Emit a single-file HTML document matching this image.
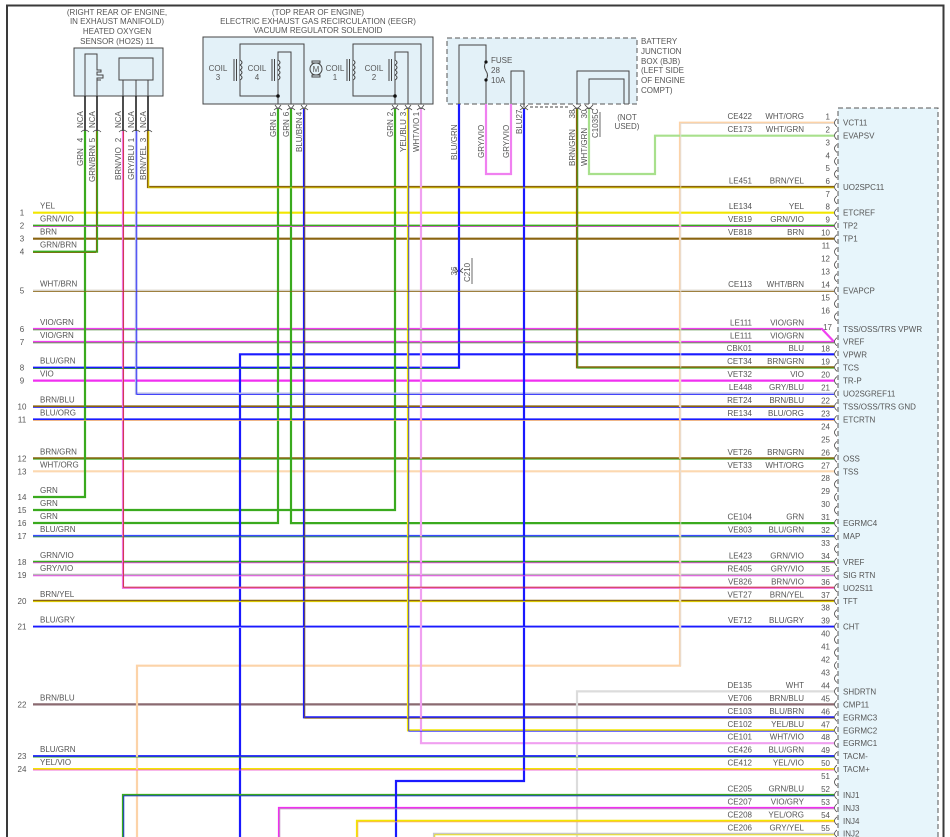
<!DOCTYPE html>
<html><head><meta charset="utf-8"><style>
html,body{margin:0;padding:0;background:#fff;width:950px;height:837px;overflow:hidden;}
svg{display:block;font-family:"Liberation Sans",Arial,sans-serif;}
text{font-size:8px;fill:#555;}
</style></head><body>
<svg width="950" height="837" viewBox="0 0 950 837" xmlns="http://www.w3.org/2000/svg">
<rect x="0" y="0" width="950" height="837" fill="#fff"/>
<path d="M7 837 V5.5 H943.5 V837" fill="none" stroke="#3a3a3a" stroke-width="2"/>
<rect x="838" y="108" width="100" height="740" fill="#e7f5fb" stroke="#555" stroke-width="1" stroke-dasharray="5,3"/>

<g font-size="8">
<text x="117" y="15" text-anchor="middle">(RIGHT REAR OF ENGINE,</text>
<text x="117" y="24" text-anchor="middle">IN EXHAUST MANIFOLD)</text>
<text x="117" y="34" text-anchor="middle">HEATED OXYGEN</text>
<text x="117" y="44" text-anchor="middle">SENSOR (HO2S) 11</text>
<text x="318" y="15" text-anchor="middle">(TOP REAR OF ENGINE)</text>
<text x="318" y="24" text-anchor="middle">ELECTRIC EXHAUST GAS RECIRCULATION (EEGR)</text>
<text x="318" y="33" text-anchor="middle">VACUUM REGULATOR SOLENOID</text>
</g>
<rect x="74" y="48" width="89" height="48" fill="#e3f1f8" stroke="#444" stroke-width="1"/>
<path d="M85 96 V54 H97 V70 H101 V72 H97 V75 H103 V78 H97 V80 H101 M97 80 V96" fill="none" stroke="#444" stroke-width="1"/>
<rect x="119" y="58" width="34" height="22" fill="#e3f1f8" stroke="#444" stroke-width="1"/>
<path d="M123 80 V96 M136 80 V96 M148 80 V96" stroke="#444" stroke-width="1"/>
<path d="M85 96 V131 M97 96 V131 M123 96 V131 M136 96 V131 M148 96 V131" stroke="#222" stroke-width="1.6"/>
<path d="M81 132 Q85 128 89 132 M93 132 Q97 128 101 132 M119 132 Q123 128 127 132 M132 132 Q136 128 140 132 M144 132 Q148 128 152 132" fill="none" stroke="#444" stroke-width="0.8"/>
<g>
<text transform="translate(83,128) rotate(-90)" text-anchor="start">NCA</text>
<text transform="translate(95,128) rotate(-90)" text-anchor="start">NCA</text>
<text transform="translate(121,128) rotate(-90)" text-anchor="start">NCA</text>
<text transform="translate(134,128) rotate(-90)" text-anchor="start">NCA</text>
<text transform="translate(146,128) rotate(-90)" text-anchor="start">NCA</text>
<text transform="translate(83,140) rotate(-90)" text-anchor="middle">4</text>
<text transform="translate(95,140) rotate(-90)" text-anchor="middle">5</text>
<text transform="translate(121,140) rotate(-90)" text-anchor="middle">2</text>
<text transform="translate(134,140) rotate(-90)" text-anchor="middle">1</text>
<text transform="translate(146,140) rotate(-90)" text-anchor="middle">3</text>
<text transform="translate(83,166) rotate(-90)" text-anchor="start">GRN</text>
<text transform="translate(95,182) rotate(-90)" text-anchor="start">GRN/BRN</text>
<text transform="translate(121,180) rotate(-90)" text-anchor="start">BRN/VIO</text>
<text transform="translate(134,180) rotate(-90)" text-anchor="start">GRY/BLU</text>
<text transform="translate(146,180) rotate(-90)" text-anchor="start">BRN/YEL</text>
</g>

<rect x="203" y="37" width="230" height="67" fill="#e3f1f8" stroke="#444" stroke-width="1"/>
<g fill="none" stroke="#444" stroke-width="1">
<path d="M278 104 V96 H240 V44 H304 V104"/>
<path d="M278 104 V52 H291 V104"/>
<path d="M395 104 V96 H353 V44 H421 V104"/>
<path d="M395 104 V52 H408 V104"/>
<path d="M240 60 q4 2.5 0 5 q4 2.5 0 5 q4 2.5 0 5 q4 2.5 0 5" fill="#e3f1f8"/>
<path d="M278 60 q4 2.5 0 5 q4 2.5 0 5 q4 2.5 0 5 q4 2.5 0 5" fill="#e3f1f8"/>
<path d="M353 60 q4 2.5 0 5 q4 2.5 0 5 q4 2.5 0 5 q4 2.5 0 5" fill="#e3f1f8"/>
<path d="M395 60 q4 2.5 0 5 q4 2.5 0 5 q4 2.5 0 5 q4 2.5 0 5" fill="#e3f1f8"/>
<path d="M234 59 V81 M236.5 59 V81 M272 59 V81 M274.5 59 V81 M347 59 V81 M349.5 59 V81 M389 59 V81 M391.5 59 V81"/>
<circle cx="316" cy="69" r="6"/>
<path d="M312 61 H320 V63 H312 Z M312 75 H320 V77 H312 Z"/>
</g>
<text x="316" y="72" text-anchor="middle" font-size="8">M</text>
<circle cx="278" cy="96" r="1.8" fill="#111"/>
<circle cx="395" cy="96" r="1.8" fill="#111"/>
<g>
<text x="218" y="71" text-anchor="middle">COIL</text><text x="218" y="80" text-anchor="middle">3</text>
<text x="257" y="71" text-anchor="middle">COIL</text><text x="257" y="80" text-anchor="middle">4</text>
<text x="335" y="71" text-anchor="middle">COIL</text><text x="335" y="80" text-anchor="middle">1</text>
<text x="374" y="71" text-anchor="middle">COIL</text><text x="374" y="80" text-anchor="middle">2</text>
</g>
<path d="M275 105 L278 109 L281 105 M288 105 L291 109 L294 105 M301 105 L304 109 L307 105 M392 105 L395 109 L398 105 M405 105 L408 109 L411 105 M418 105 L421 109 L424 105" fill="none" stroke="#444" stroke-width="0.8"/>
<path d="M274 110 Q278 106 282 110 M287 110 Q291 106 295 110 M300 110 Q304 106 308 110 M391 110 Q395 106 399 110 M404 110 Q408 106 412 110 M417 110 Q421 106 425 110" fill="none" stroke="#444" stroke-width="0.8"/>
<g>
<text transform="translate(276,114) rotate(-90)" text-anchor="middle">5</text>
<text transform="translate(289,114) rotate(-90)" text-anchor="middle">6</text>
<text transform="translate(302,114) rotate(-90)" text-anchor="middle">4</text>
<text transform="translate(393,114) rotate(-90)" text-anchor="middle">2</text>
<text transform="translate(406,114) rotate(-90)" text-anchor="middle">3</text>
<text transform="translate(419,114) rotate(-90)" text-anchor="middle">1</text>
<text transform="translate(276,137) rotate(-90)" text-anchor="start">GRN</text>
<text transform="translate(289,137) rotate(-90)" text-anchor="start">GRN</text>
<text transform="translate(302,152) rotate(-90)" text-anchor="start">BLU/BRN</text>
<text transform="translate(393,137) rotate(-90)" text-anchor="start">GRN</text>
<text transform="translate(406,152) rotate(-90)" text-anchor="start">YEL/BLU</text>
<text transform="translate(419,152) rotate(-90)" text-anchor="start">WHT/VIO</text>
</g>

<rect x="447" y="38" width="190" height="66" fill="#e3f1f8" stroke="#555" stroke-width="1" stroke-dasharray="5,3"/>
<g fill="none" stroke="#444" stroke-width="1">
<path d="M459 104 V45 H486 V62 M486 80 V104"/>
<path d="M486 62 q-3 4 0 9 q3 4 0 9"/>
<path d="M511 104 V71 H524 V104"/>
<path d="M577 104 V71 H629 V104"/>
<path d="M589 104 V79 H624 V104"/>
<path d="M524 104 V107 M530 107 H570" stroke-dasharray="3,2"/>
<path d="M520 105 L524 109 L528 105 M573 105 L577 109 L581 105 M585 105 L589 109 L593 105" stroke-width="0.8"/>
<path d="M520 110 Q524 106 528 110 M573 110 Q577 106 581 110 M585 110 Q589 106 593 110" stroke-width="0.8"/>
<path d="M600 112 V137" stroke-width="0.8"/>
</g>
<circle cx="486" cy="62" r="1.6" fill="#111"/><circle cx="486" cy="80" r="1.6" fill="#111"/>
<text x="491" y="63">FUSE</text><text x="491" y="73">28</text><text x="491" y="83">10A</text>
<text x="641" y="44">BATTERY</text><text x="641" y="54">JUNCTION</text><text x="641" y="64">BOX (BJB)</text>
<text x="641" y="73">(LEFT SIDE</text><text x="641" y="83">OF ENGINE</text><text x="641" y="93">COMPT)</text>
<text x="627" y="120" text-anchor="middle">(NOT</text><text x="627" y="129" text-anchor="middle">USED)</text>
<g>
<text transform="translate(457,160) rotate(-90)" text-anchor="start">BLU/GRN</text>
<text transform="translate(484,158) rotate(-90)" text-anchor="start">GRY/VIO</text>
<text transform="translate(509,158) rotate(-90)" text-anchor="start">GRY/VIO</text>
<text transform="translate(522,114) rotate(-90)" text-anchor="middle">27</text>
<text transform="translate(522,134) rotate(-90)" text-anchor="start">BLU</text>
<text transform="translate(575,114) rotate(-90)" text-anchor="middle">38</text>
<text transform="translate(587,114) rotate(-90)" text-anchor="middle">30</text>
<text transform="translate(575,166) rotate(-90)" text-anchor="start">BRN/GRN</text>
<text transform="translate(587,166) rotate(-90)" text-anchor="start">WHT/GRN</text>
<text transform="translate(598,138) rotate(-90)" text-anchor="start">C1035C</text>
</g>
<path d="M455 268 L459 272 L463 268 M455 273 Q459 269 463 273" fill="none" stroke="#444" stroke-width="0.8"/>
<text transform="translate(457,271) rotate(-90)" text-anchor="middle">36</text>
<text transform="translate(470,282) rotate(-90)" text-anchor="start">C210</text>
<path d="M472 258 V284" stroke="#444" stroke-width="0.8"/>

<g fill="none" stroke-linejoin="miter">
<g stroke-width="2.2">
<path stroke="#f2e600" d="M33 212.7 H834"/>
<path stroke="#3aaa1e" d="M33 225.7 H834"/>
<path stroke="#8a6410" d="M33 238.7 H834"/>
<path stroke="#3aaa1e" d="M33 251.7 H97 V131"/>
<path stroke="#d8d2c8" d="M33 290.7 H834"/>
<path stroke="#f040f0" d="M33 329 H822 L834 341.7"/>
<path stroke="#f040f0" d="M33 342 H834"/>
<path stroke="#1a1aff" d="M33 367.7 H459 V104"/>
<path stroke="#f030f0" d="M33 380.6 H834"/>
<path stroke="#8a6410" d="M33 406.5 H834"/>
<path stroke="#1a1aff" d="M33 419.5 H834"/>
<path stroke="#8a6410" d="M33 458.3 H834"/>
<path stroke="#fcd8b0" d="M33 471.3 H834"/>
<path stroke="#3aaa1e" d="M33 497 H85 V131"/>
<path stroke="#3aaa1e" d="M33 510 H395 V109"/>
<path stroke="#3aaa1e" d="M33 523 H278 V109"/>
<path stroke="#3a4aff" d="M33 536 H834"/>
<path stroke="#3aaa1e" d="M33 561.9 H834"/>
<path stroke="#b8b8b8" d="M33 574.9 H834"/>
<path stroke="#8a6410" d="M33 600.8 H834"/>
<path stroke="#1a1aff" d="M33 626.7 H834"/>
<path stroke="#8a6a70" d="M33 704.4 H834"/>
<path stroke="#1a1aff" d="M33 756.2 H834"/>
<path stroke="#f2e600" d="M33 769.1 H834"/>
<path stroke="#fcd3a8" d="M834 122.7 H680 V665.7 H137 V837"/>
<path stroke="#a8e08c" d="M834 135.7 H655 V174 H589 V109"/>
<path stroke="#8a6410" d="M834 187 H148 V131"/>
<path stroke="#1a1aff" d="M834 354.3 H240 V837"/>
<path stroke="#8a6410" d="M834 367.3 H577 V109"/>
<path stroke="#b0b4e8" d="M834 393.6 H136 V131"/>
<path stroke="#3aaa1e" d="M834 523.1 H291 V109"/>
<path stroke="#f070e0" d="M834 587.8 H123 V131"/>
<path stroke="#dcdcdc" d="M834 691.4 H577 V837"/>
<path stroke="#1a1aff" d="M834 717.3 H304 V109"/>
<path stroke="#f2e600" d="M834 730.3 H408 V109"/>
<path stroke="#f0a0f0" d="M834 743.2 H421 V109"/>
<path stroke="#3aaa1e" d="M834 795 H123 V837"/>
<path stroke="#f030f0" d="M834 808 H279 V837"/>
<path stroke="#f2e600" d="M834 820.9 H357 V837"/>
<path stroke="#c8c8c8" d="M834 833.9 H434 V837"/>
<path stroke="#1a1aff" d="M524 109 V781 H396 V837"/>
<path stroke="#f080f0" d="M486 104 V174 H511 V104"/>
</g>
<g stroke-width="0.8">
<path stroke="#f040f0" d="M33 226.6 H834"/>
<path stroke="#8a6410" d="M33 252.6 H96 M96.6 252 V131"/>
<path stroke="#8a6410" d="M33 291.6 H834"/>
<path stroke="#3aaa1e" d="M33 329.9 H821"/>
<path stroke="#3aaa1e" d="M33 342.9 H834"/>
<path stroke="#3aaa1e" d="M33 368.6 H458.6"/>
<path stroke="#1a1aff" d="M33 407.4 H834"/>
<path stroke="#fcb060" d="M33 420.4 H834"/>
<path stroke="#3aaa1e" d="M33 459.2 H834"/>
<path stroke="#3aaa1e" d="M33 536.9 H834"/>
<path stroke="#f040f0" d="M33 562.8 H834"/>
<path stroke="#f040f0" d="M33 575.8 H834"/>
<path stroke="#f2e600" d="M33 601.7 H834"/>
<path stroke="#b0b0ff" d="M33 627.6 H834"/>
<path stroke="#3aaa1e" d="M33 757.1 H834"/>
<path stroke="#f040f0" d="M33 770 H834"/>
<path stroke="#e0e0e0" d="M834 123.6 H680.8 V665.7"/>
<path stroke="#f2e600" d="M834 187.9 H148.8 V131"/>
<path stroke="#3aaa1e" d="M834 368.2 H577.8 V109"/>
<path stroke="#1a1aff" d="M834 394.5 H136.8 V131"/>
<path stroke="#c83030" d="M834 587.2 H123.5 V131"/>
<path stroke="#8a6410" d="M834 718.2 H304.8 V109"/>
<path stroke="#1a1aff" d="M834 731.2 H408.8 V109"/>
<path stroke="#1a1aff" d="M834 795.9 H123.8 V837"/>
<path stroke="#b0b0b0" d="M834 808.9 H279.8 V837"/>
<path stroke="#fcb060" d="M834 821.8 H357.8 V837"/>
<path stroke="#f2e600" d="M834 834.8 H434.8 V837"/>
</g>
</g>

<path fill="none" stroke="#444" stroke-width="0.8" d="M837 118.7 Q832 122.7 837 126.7 M837 131.6 Q832 135.6 837 139.6 M837 144.4 Q832 148.4 837 152.4 M837 157.3 Q832 161.3 837 165.3 M837 170.1 Q832 174.1 837 178.1 M837 183 Q832 187 837 191 M837 195.9 Q832 199.9 837 203.9 M837 208.7 Q832 212.7 837 216.7 M837 221.7 Q832 225.7 837 229.7 M837 234.7 Q832 238.7 837 242.7 M837 247.7 Q832 251.7 837 255.7 M837 260.7 Q832 264.7 837 268.7 M837 273.7 Q832 277.7 837 281.7 M837 286.7 Q832 290.7 837 294.7 M837 299.7 Q832 303.7 837 307.7 M837 312.7 Q832 316.7 837 320.7 M837 337.7 Q832 341.7 837 345.7 M837 350.3 Q832 354.3 837 358.3 M837 363.3 Q832 367.3 837 371.3 M837 376.6 Q832 380.6 837 384.6 M837 389.6 Q832 393.6 837 397.6 M837 402.5 Q832 406.5 837 410.5 M837 415.5 Q832 419.5 837 423.5 M837 428.4 Q832 432.4 837 436.4 M837 441.4 Q832 445.4 837 449.4 M837 454.3 Q832 458.3 837 462.3 M837 467.3 Q832 471.3 837 475.3 M837 480.2 Q832 484.2 837 488.2 M837 493.2 Q832 497.2 837 501.2 M837 506.1 Q832 510.1 837 514.1 M837 519.1 Q832 523.1 837 527.1 M837 532 Q832 536 837 540 M837 545 Q832 549 837 553 M837 557.9 Q832 561.9 837 565.9 M837 570.9 Q832 574.9 837 578.9 M837 583.8 Q832 587.8 837 591.8 M837 596.8 Q832 600.8 837 604.8 M837 609.7 Q832 613.7 837 617.7 M837 622.7 Q832 626.7 837 630.7 M837 635.6 Q832 639.6 837 643.6 M837 648.6 Q832 652.6 837 656.6 M837 661.5 Q832 665.5 837 669.5 M837 674.5 Q832 678.5 837 682.5 M837 687.4 Q832 691.4 837 695.4 M837 700.4 Q832 704.4 837 708.4 M837 713.3 Q832 717.3 837 721.3 M837 726.3 Q832 730.3 837 734.3 M837 739.2 Q832 743.2 837 747.2 M837 752.2 Q832 756.2 837 760.2 M837 765.1 Q832 769.1 837 773.1 M837 778.1 Q832 782.1 837 786.1 M837 791 Q832 795 837 799 M837 804 Q832 808 837 812 M837 816.9 Q832 820.9 837 824.9 M837 829.9 Q832 833.9 837 837"/>

<g text-anchor="end">
<text x="830" y="119.7">1</text><text x="830" y="132.6">2</text><text x="830" y="145.4">3</text><text x="830" y="158.3">4</text><text x="830" y="171.1">5</text><text x="830" y="184">6</text><text x="830" y="196.9">7</text><text x="830" y="209.7">8</text><text x="830" y="222.7">9</text><text x="830" y="235.7">10</text><text x="830" y="248.7">11</text><text x="830" y="261.7">12</text><text x="830" y="274.7">13</text><text x="830" y="287.7">14</text><text x="830" y="300.7">15</text><text x="830" y="313.7">16</text><text x="832" y="330">17</text><text x="830" y="351.3">18</text><text x="830" y="364.3">19</text><text x="830" y="377.6">20</text><text x="830" y="390.6">21</text><text x="830" y="403.5">22</text><text x="830" y="416.5">23</text><text x="830" y="429.4">24</text><text x="830" y="442.4">25</text><text x="830" y="455.3">26</text><text x="830" y="468.3">27</text><text x="830" y="481.2">28</text><text x="830" y="494.2">29</text><text x="830" y="507.1">30</text><text x="830" y="520.1">31</text><text x="830" y="533">32</text><text x="830" y="546">33</text><text x="830" y="558.9">34</text><text x="830" y="571.9">35</text><text x="830" y="584.8">36</text><text x="830" y="597.8">37</text><text x="830" y="610.7">38</text><text x="830" y="623.7">39</text><text x="830" y="636.6">40</text><text x="830" y="649.6">41</text><text x="830" y="662.5">42</text><text x="830" y="675.5">43</text><text x="830" y="688.4">44</text><text x="830" y="701.4">45</text><text x="830" y="714.3">46</text><text x="830" y="727.3">47</text><text x="830" y="740.2">48</text><text x="830" y="753.2">49</text><text x="830" y="766.1">50</text><text x="830" y="779.1">51</text><text x="830" y="792">52</text><text x="830" y="805">53</text><text x="830" y="817.9">54</text><text x="830" y="830.9">55</text>
</g>
<g>
<text x="843" y="125.7">VCT11</text><text x="843" y="138.6">EVAPSV</text><text x="843" y="190">UO2SPC11</text><text x="843" y="215.7">ETCREF</text><text x="843" y="228.7">TP2</text><text x="843" y="241.7">TP1</text><text x="843" y="293.7">EVAPCP</text><text x="843" y="332">TSS/OSS/TRS VPWR</text><text x="843" y="344.7">VREF</text><text x="843" y="357.3">VPWR</text><text x="843" y="370.3">TCS</text><text x="843" y="383.6">TR-P</text><text x="843" y="396.6">UO2SGREF11</text><text x="843" y="409.5">TSS/OSS/TRS GND</text><text x="843" y="422.5">ETCRTN</text><text x="843" y="461.3">OSS</text><text x="843" y="474.3">TSS</text><text x="843" y="526.1">EGRMC4</text><text x="843" y="539">MAP</text><text x="843" y="564.9">VREF</text><text x="843" y="577.9">SIG RTN</text><text x="843" y="590.8">UO2S11</text><text x="843" y="603.8">TFT</text><text x="843" y="629.7">CHT</text><text x="843" y="694.4">SHDRTN</text><text x="843" y="707.4">CMP11</text><text x="843" y="720.3">EGRMC3</text><text x="843" y="733.3">EGRMC2</text><text x="843" y="746.2">EGRMC1</text><text x="843" y="759.2">TACM-</text><text x="843" y="772.1">TACM+</text><text x="843" y="798">INJ1</text><text x="843" y="811">INJ3</text><text x="843" y="823.9">INJ4</text><text x="843" y="836.5">INJ2</text>
</g>
<g text-anchor="end">
<text x="752" y="119.2">CE422</text><text x="804" y="119.2">WHT/ORG</text>
<text x="752" y="132.1">CE173</text><text x="804" y="132.1">WHT/GRN</text>
<text x="752" y="183.5">LE451</text><text x="804" y="183.5">BRN/YEL</text>
<text x="752" y="209.2">LE134</text><text x="804" y="209.2">YEL</text>
<text x="752" y="222.2">VE819</text><text x="804" y="222.2">GRN/VIO</text>
<text x="752" y="235.2">VE818</text><text x="804" y="235.2">BRN</text>
<text x="752" y="287.2">CE113</text><text x="804" y="287.2">WHT/BRN</text>
<text x="752" y="325.5">LE111</text><text x="804" y="325.5">VIO/GRN</text>
<text x="752" y="338.5">LE111</text><text x="804" y="338.5">VIO/GRN</text>
<text x="752" y="350.8">CBK01</text><text x="804" y="350.8">BLU</text>
<text x="752" y="363.8">CET34</text><text x="804" y="363.8">BRN/GRN</text>
<text x="752" y="377.1">VET32</text><text x="804" y="377.1">VIO</text>
<text x="752" y="390.1">LE448</text><text x="804" y="390.1">GRY/BLU</text>
<text x="752" y="403">RET24</text><text x="804" y="403">BRN/BLU</text>
<text x="752" y="416">RE134</text><text x="804" y="416">BLU/ORG</text>
<text x="752" y="454.8">VET26</text><text x="804" y="454.8">BRN/GRN</text>
<text x="752" y="467.8">VET33</text><text x="804" y="467.8">WHT/ORG</text>
<text x="752" y="519.6">CE104</text><text x="804" y="519.6">GRN</text>
<text x="752" y="532.5">VE803</text><text x="804" y="532.5">BLU/GRN</text>
<text x="752" y="558.4">LE423</text><text x="804" y="558.4">GRN/VIO</text>
<text x="752" y="571.4">RE405</text><text x="804" y="571.4">GRY/VIO</text>
<text x="752" y="584.3">VE826</text><text x="804" y="584.3">BRN/VIO</text>
<text x="752" y="597.3">VET27</text><text x="804" y="597.3">BRN/YEL</text>
<text x="752" y="623.2">VE712</text><text x="804" y="623.2">BLU/GRY</text>
<text x="752" y="687.9">DE135</text><text x="804" y="687.9">WHT</text>
<text x="752" y="700.9">VE706</text><text x="804" y="700.9">BRN/BLU</text>
<text x="752" y="713.8">CE103</text><text x="804" y="713.8">BLU/BRN</text>
<text x="752" y="726.8">CE102</text><text x="804" y="726.8">YEL/BLU</text>
<text x="752" y="739.7">CE101</text><text x="804" y="739.7">WHT/VIO</text>
<text x="752" y="752.7">CE426</text><text x="804" y="752.7">BLU/GRN</text>
<text x="752" y="765.6">CE412</text><text x="804" y="765.6">YEL/VIO</text>
<text x="752" y="791.5">CE205</text><text x="804" y="791.5">GRN/BLU</text>
<text x="752" y="804.5">CE207</text><text x="804" y="804.5">VIO/GRY</text>
<text x="752" y="817.4">CE208</text><text x="804" y="817.4">YEL/ORG</text>
<text x="752" y="830.4">CE206</text><text x="804" y="830.4">GRY/YEL</text>
</g>
<g text-anchor="middle">
<text x="22" y="215.7">1</text><text x="22" y="228.7">2</text><text x="22" y="241.7">3</text><text x="22" y="254.7">4</text><text x="22" y="293.7">5</text><text x="22" y="332">6</text><text x="22" y="345">7</text><text x="22" y="370.7">8</text><text x="22" y="383.6">9</text><text x="22" y="409.5">10</text><text x="22" y="422.5">11</text><text x="22" y="461.3">12</text><text x="22" y="474.3">13</text><text x="22" y="500">14</text><text x="22" y="513">15</text><text x="22" y="526">16</text><text x="22" y="539">17</text><text x="22" y="564.9">18</text><text x="22" y="577.9">19</text><text x="22" y="603.8">20</text><text x="22" y="629.7">21</text><text x="22" y="707.4">22</text><text x="22" y="759.2">23</text><text x="22" y="772.1">24</text>
</g>
<g>
<text x="40" y="208.7">YEL</text><text x="40" y="221.7">GRN/VIO</text><text x="40" y="234.7">BRN</text><text x="40" y="247.7">GRN/BRN</text><text x="40" y="286.7">WHT/BRN</text><text x="40" y="325">VIO/GRN</text><text x="40" y="338">VIO/GRN</text><text x="40" y="363.7">BLU/GRN</text><text x="40" y="376.6">VIO</text><text x="40" y="402.5">BRN/BLU</text><text x="40" y="415.5">BLU/ORG</text><text x="40" y="454.3">BRN/GRN</text><text x="40" y="467.3">WHT/ORG</text><text x="40" y="493">GRN</text><text x="40" y="506">GRN</text><text x="40" y="519">GRN</text><text x="40" y="532">BLU/GRN</text><text x="40" y="557.9">GRN/VIO</text><text x="40" y="570.9">GRY/VIO</text><text x="40" y="596.8">BRN/YEL</text><text x="40" y="622.7">BLU/GRY</text><text x="40" y="700.4">BRN/BLU</text><text x="40" y="752.2">BLU/GRN</text><text x="40" y="765.1">YEL/VIO</text>
</g>
</svg>
</body></html>
